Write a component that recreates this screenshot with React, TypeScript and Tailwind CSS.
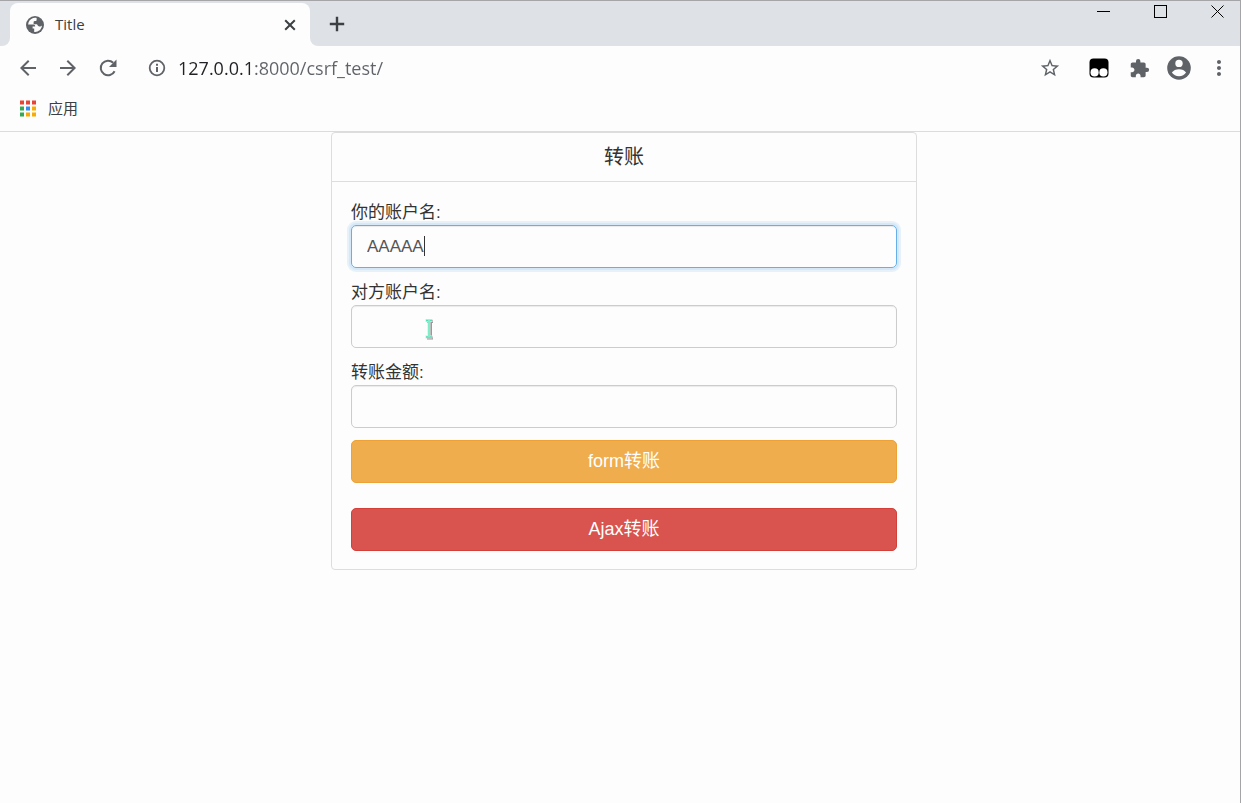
import React from "react";
import {
  MdArrowBack,
  MdArrowForward,
  MdExtension,
  MdMoreVert,
  MdStarBorder,
} from "react-icons/md";

const uiFont = "font-['Open_Sans','Noto_Sans_CJK_SC',sans-serif]";
const pageFont = "font-['Liberation_Sans','Noto_Sans_CJK_SC',sans-serif]";

const appColors = [
  "#ea4335", "#ea4335", "#ea4335",
  "#34a853", "#2f8df5", "#f9ab00",
  "#34a853", "#f9ab00", "#f9ab00",
];

const fields = [
  { id: "from", label: "你的账户名:", value: "AAAAA" },
  { id: "to", label: "对方账户名:", value: "" },
  { id: "money", label: "转账金额:", value: "" },
];

function AppsIcon() {
  return (
    <svg width="18" height="18" viewBox="0 0 18 18">
      {appColors.map((color, i) => (
        <rect
          key={i}
          x={1 + (i % 3) * 6}
          y={0.5 + Math.floor(i / 3) * 6}
          width="4"
          height="4"
          fill={color}
        />
      ))}
    </svg>
  );
}

function GlobeIcon() {
  return (
    <svg width="22" height="22" viewBox="0 0 22 22">
      <circle cx="11" cy="11" r="9" fill="#5f6368" />
      <path
        d="M12.6 3.9C9.4 3.2 6 5 4.6 8.2L4.1 10.6H9.2C10.6 10.6 11.2 11.4 11.2 12.6H8.6V14.6H10.2V17.9C14 18.4 17.6 15.8 18 11.6C17.2 12.6 15.8 12.8 14.6 12.2C13.6 11.7 13.6 10.4 12.6 10.2H9.6V8.2C9.6 7.2 10.4 7 11.6 7C12.6 7 12.8 6 12.6 3.9Z"
        fill="#fdfdfd"
      />
    </svg>
  );
}

function ReloadIcon() {
  return (
    <svg width="24" height="24" viewBox="0 0 24 24">
      <path
        d="M18.6 15.2A7.3 7.3 0 1 1 17.2 6.8"
        fill="none"
        stroke="currentColor"
        strokeWidth="2"
      />
      <path d="M20.5 3.5V11H13Z" fill="currentColor" />
    </svg>
  );
}

function InfoIcon() {
  return (
    <svg width="20" height="20" viewBox="0 0 20 20">
      <circle cx="10" cy="10" r="7.3" fill="none" stroke="currentColor" strokeWidth="1.8" />
      <path d="M10 9v5M10 5.8v2" stroke="currentColor" strokeWidth="2" />
    </svg>
  );
}

function ProfileIcon() {
  return (
    <svg width="28" height="28" viewBox="0 0 28 28">
      <circle cx="14" cy="14" r="11.8" fill="currentColor" />
      <circle cx="14" cy="9.4" r="3.7" fill="#fdfdfd" />
      <path
        d="M6.9 18.6C8.2 16.4 11.2 15.2 14 15.2S19.8 16.4 21.1 18.6C19.6 20.9 17 22.3 14 22.3S8.4 20.9 6.9 18.6Z"
        fill="#fdfdfd"
      />
    </svg>
  );
}

function MonkeyIcon() {
  return (
    <svg width="20" height="20" viewBox="0 0 20 20">
      <rect x="0.5" y="0.5" width="19" height="19" rx="4" fill="#000" />
      <circle cx="5.6" cy="14.4" r="4.1" fill="#fff" />
      <circle cx="14.4" cy="14.4" r="4.1" fill="#fff" />
    </svg>
  );
}

function TextCursor() {
  return (
    <svg
      width="12"
      height="22"
      viewBox="0 0 12 22"
      className="absolute left-[73px] top-[13px] pointer-events-none"
    >
      <path d="M3 3.5h6M3 20h6M6.5 3v17" stroke="#999" strokeWidth="3" fill="none" />
      <path d="M1.5 2.5h7M1.5 19h7M5 2v17" stroke="#e4e4e4" strokeWidth="3" fill="none" />
      <path d="M2 2.5h6M2 19h6" stroke="#4fe0b8" strokeWidth="1.5" fill="none" />
      <path d="M5 2v17" stroke="#7fecca" strokeWidth="2" fill="none" />
    </svg>
  );
}

function TabStrip() {
  return (
    <div className="flex h-[46px] border-t border-[#a5a5a7]">
      <div className="w-[10px] bg-[#dee1e6] rounded-br-lg" />
      <div className="bg-[#dee1e6] pt-[2px]">
        <div className="flex items-center w-[300px] h-full bg-[#fdfdfd] rounded-t-lg pl-[14px] pr-[11px]">
          <GlobeIcon />
          <span className="flex-1 pl-[9px] text-[15px] text-[#3c4043]">Title</span>
          <button aria-label="Close tab" className="text-[#3c4043]">
            <svg width="18" height="18" viewBox="0 0 18 18">
              <path d="M4.2 4.2l9.6 9.6M13.8 4.2l-9.6 9.6" stroke="currentColor" strokeWidth="2" />
            </svg>
          </button>
        </div>
      </div>
      <div className="flex flex-1 justify-between bg-[#dee1e6] rounded-bl-lg">
        <button aria-label="New tab" className="pl-[15px] text-[#3c4043]">
          <svg width="24" height="24" viewBox="0 0 24 24">
            <path d="M12 4.8v14.4M4.8 12h14.4" stroke="currentColor" strokeWidth="2.4" />
          </svg>
        </button>
        <div className="flex h-5 items-center gap-[42px] pr-[15px]">
          <button aria-label="Minimize">
            <svg width="15" height="15" viewBox="0 0 15 15">
              <path d="M1 7.5h13" stroke="#000" />
            </svg>
          </button>
          <button aria-label="Maximize">
            <svg width="15" height="15" viewBox="0 0 15 15">
              <rect x="1.5" y="1.5" width="12" height="12" fill="none" stroke="#000" />
            </svg>
          </button>
          <button aria-label="Close">
            <svg width="15" height="15" viewBox="0 0 15 15">
              <path d="M1.5 1.5l12 12M13.5 1.5l-12 12" stroke="#000" />
            </svg>
          </button>
        </div>
      </div>
    </div>
  );
}

function Toolbar() {
  return (
    <div className="flex h-11 items-center px-4 text-[#5f6368]">
      <div className="flex gap-4">
        <button aria-label="Back">
          <MdArrowBack size={24} />
        </button>
        <button aria-label="Forward">
          <MdArrowForward size={24} />
        </button>
        <button aria-label="Reload">
          <ReloadIcon />
        </button>
      </div>
      <button aria-label="Site information" className="ml-[27px]">
        <InfoIcon />
      </button>
      {/* host part is darker than the path */}
      <input
        aria-label="Address"
        defaultValue="127.0.0.1:8000/csrf_test/"
        className="ml-[11px] min-w-0 flex-1 bg-[linear-gradient(to_right,#202124_74px,#5f6368_74px)] bg-clip-text text-lg text-transparent outline-none"
      />
      <button aria-label="Bookmark" className="mr-7">
        <MdStarBorder size={22} />
      </button>
      <div className="flex items-center gap-5">
        <button aria-label="Tampermonkey">
          <MonkeyIcon />
        </button>
        <button aria-label="Extensions">
          <MdExtension size={21} />
        </button>
      </div>
      <button aria-label="Profile" className="ml-[15px]">
        <ProfileIcon />
      </button>
      <button aria-label="Menu" className="ml-[14px] -mr-[7px]">
        <MdMoreVert size={24} />
      </button>
    </div>
  );
}

export default function App() {
  return (
    <div className={`min-h-screen bg-[#fdfdfd] border-r border-[#a5a5a7] ${uiFont}`}>
      <TabStrip />
      <Toolbar />
      <div className="flex h-[42px] items-center border-b border-[#dadce0] px-[19px] pb-1">
        <a href="#apps" className="flex items-center gap-[11px] text-[15px] text-[#3c4043]">
          <AppsIcon />
          应用
        </a>
      </div>

      <main className={`pl-2 text-[#333] ${pageFont}`}>
        <div className="mx-auto max-w-[586px] rounded border border-[#ddd]">
          <h3 className="border-b border-[#ddd] py-[10px] text-center text-[20px] leading-7">
            转账
          </h3>
          <form className="px-[19px] py-[18px]" onSubmit={(e) => e.preventDefault()}>
            {fields.map((field) => (
              <div key={field.id} className="mb-3">
                <label htmlFor={field.id} className="block text-[17px] leading-[25px]">
                  {field.label}
                </label>
                <div className="relative">
                  <input
                    id={field.id}
                    defaultValue={field.value}
                    className={`block h-[43px] w-full rounded-[5px] border px-[15px] text-[17px] text-[#555] caret-transparent outline-none ${
                      field.id === "from"
                        ? "border-[#66afe9] shadow-[inset_0_1px_1px_rgba(0,0,0,0.075),0_0_0_2px_rgba(102,175,233,0.12),0_0_0_4px_rgba(102,175,233,0.15)]"
                        : "border-[#ccc] shadow-[inset_0_1px_1px_rgba(0,0,0,0.075)]"
                    }`}
                  />
                  {field.id === "from" && (
                    <span className="absolute left-[73px] top-[11px] h-5 w-px bg-[#333]" />
                  )}
                  {field.id === "to" && <TextCursor />}
                </div>
              </div>
            ))}
            <button className="block h-[43px] w-full rounded-[5px] border border-[#eea236] bg-[#f0ad4e] pb-[2px] text-lg leading-6 text-white">
              form转账
            </button>
            <button
              type="button"
              className="mt-[25px] block h-[43px] w-full rounded-[5px] border border-[#d43f3a] bg-[#d9534f] pb-[2px] text-lg leading-6 text-white"
            >
              Ajax转账
            </button>
          </form>
        </div>
      </main>
    </div>
  );
}
